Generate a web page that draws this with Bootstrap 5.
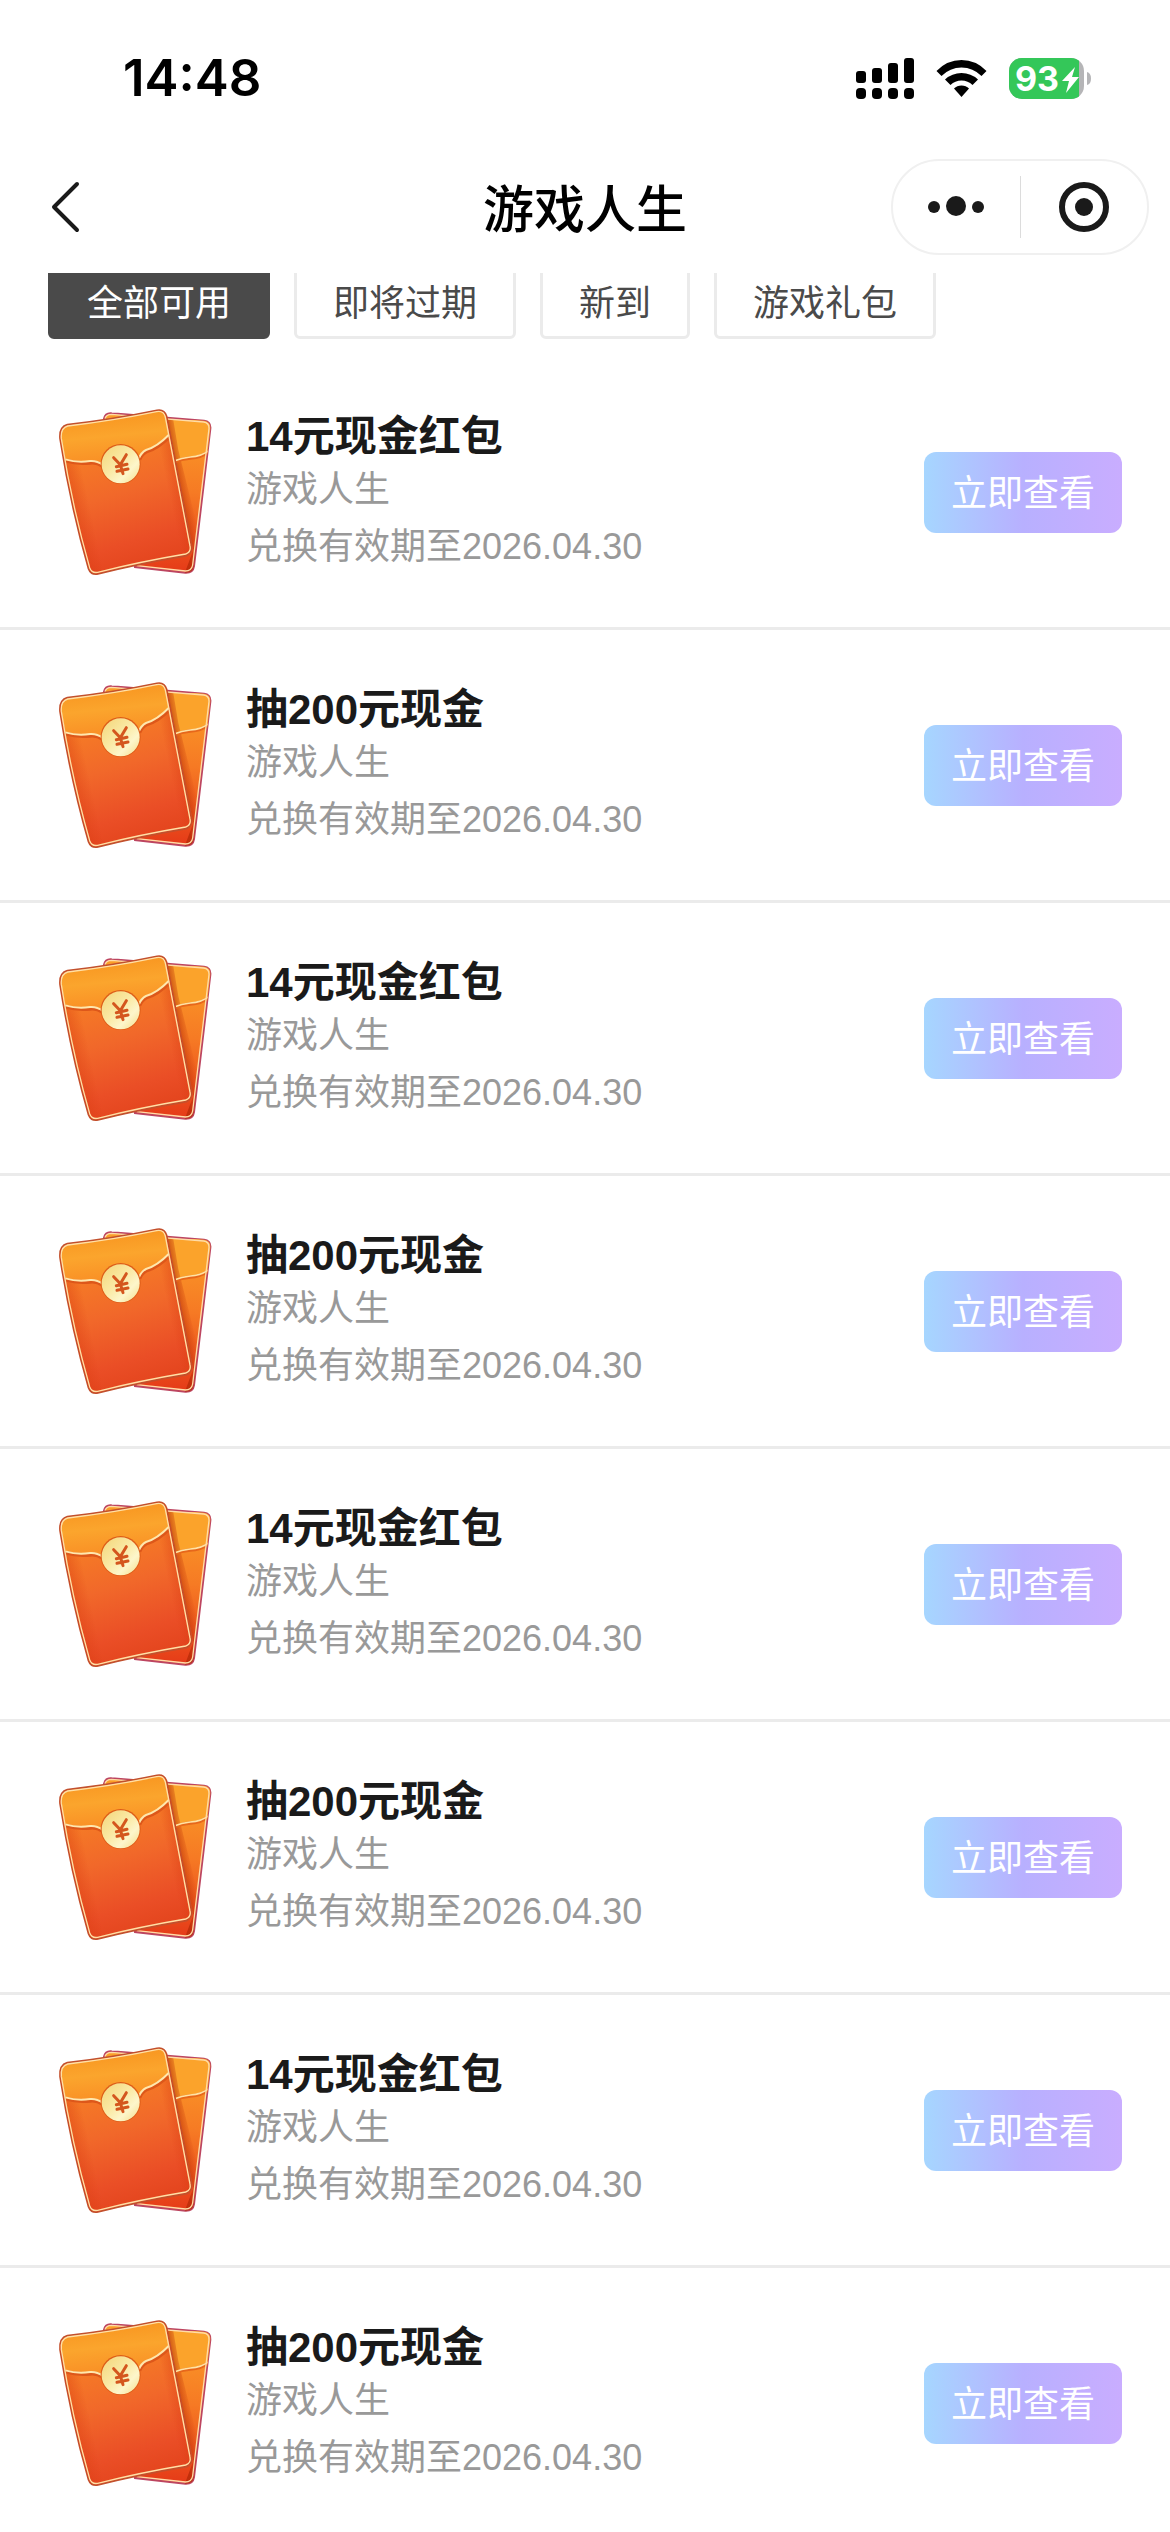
<!DOCTYPE html>
<html lang="zh-CN">
<head>
<meta charset="utf-8">
<meta name="viewport" content="width=device-width, initial-scale=1">
<title>游戏人生</title>
<link href="https://cdn.jsdelivr.net/npm/bootstrap@5.3.0/dist/css/bootstrap.min.css" rel="stylesheet">
<style>
  body { font-family: "Liberation Sans", "Noto Sans CJK SC", sans-serif; font-size: 36px; color: #1a1a1a; }
  .status-bar { height: 156px; padding: 0 78px 0 123px; }
  .clock { font-family: Inter, sans-serif; font-weight: 600; font-size: 51px; line-height: 60px; }
  .status-icons { gap: 22px; }
  .battery-text { font-family: Inter, sans-serif; font-weight: 700; font-size: 34px; }
  .title-bar { height: 117px; padding: 3px 21px 18px; }
  .title-side { flex: 1 1 0; }
  .back-link { margin-left: 27px; }
  .page-title { font-family: "Noto Sans CJK SC", sans-serif; font-size: 51px; font-weight: 500; line-height: 60px; padding-bottom: 2px; color: #000; }
  .capsule { width: 258px; height: 96px; border: 2px solid #f0f0f0; }
  .capsule .divider { width: 1px; height: 62px; background: #dcdcdc; }
  .tab-strip { gap: 24px; padding: 0 48px 18px; margin-top: -9px; }
  .tab-strip .btn { font-size: 36px; line-height: 52px; padding: 11px 36px 6px; border: 3px solid #ebebeb; border-radius: 6px; color: #4a4a4a; background: #fff; }
  .tab-strip .btn.active { background: #4a4a4a; border-color: #4a4a4a; color: #fff; }
  .coupon { height: 273px; padding: 0 48px; gap: 18px; border-bottom: 3px solid #ebebeb; }
  .coupon-text { padding-top: 3px; }
  .coupon-name { font-size: 42px; font-weight: 700; line-height: 54px; }
  .coupon-from { line-height: 52px; color: #999; }
  .coupon-date { line-height: 62px; color: #999; }
  .btn-look { font-size: 36px; line-height: 54px; padding: 14px 26px 11px; border-radius: 12px; color: #fff; border: 1px solid transparent; background: linear-gradient(90deg, #a6d6ff, #b8b0ff 50%, #c9adff) border-box; }
</style>
</head>
<body class="bg-white">
<svg class="position-absolute" width="0" height="0" aria-hidden="true">
  <defs>
    <linearGradient id="front" x1="0.35" y1="0" x2="0.6" y2="1"><stop offset="0" stop-color="#f98a22"/><stop offset=".5" stop-color="#f1682a"/><stop offset=".8" stop-color="#ea4e26"/><stop offset="1" stop-color="#e2431c"/></linearGradient>
    <linearGradient id="flap" x1="0.4" y1="0" x2="0.6" y2="1"><stop offset="0" stop-color="#f8941f"/><stop offset=".45" stop-color="#fba52d"/><stop offset="1" stop-color="#f98b24"/></linearGradient>
    <linearGradient id="back" x1="0" y1="0" x2="0" y2="1"><stop offset="0" stop-color="#fba028"/><stop offset=".5" stop-color="#f67a24"/><stop offset="1" stop-color="#e53a18"/></linearGradient>
    <linearGradient id="side" gradientUnits="userSpaceOnUse" x1="102" y1="346" x2="420" y2="278"><stop offset="0" stop-color="#d93a10" stop-opacity=".4"/><stop offset=".14" stop-color="#d93a10" stop-opacity="0"/><stop offset=".88" stop-color="#d93a10" stop-opacity="0"/><stop offset="1" stop-color="#d93a10" stop-opacity=".4"/></linearGradient>
    <linearGradient id="shade" gradientUnits="userSpaceOnUse" x1="412" y1="300" x2="452" y2="293"><stop offset="0" stop-color="#b52a06" stop-opacity=".75"/><stop offset="1" stop-color="#c93a0a" stop-opacity="0"/></linearGradient>
    <linearGradient id="coin" x1="0" y1="0" x2="1" y2="1"><stop offset="0" stop-color="#f3d67a"/><stop offset=".45" stop-color="#fae9a4"/><stop offset=".7" stop-color="#fdf6cb"/><stop offset="1" stop-color="#f4dc88"/></linearGradient>
    <clipPath id="backClip"><path d="M192 86Q196 68 215 70L492 92Q513 95 511 116L462 528Q459 549 436 548L285 531Z"/></clipPath>
  </defs>
  <symbol id="packet" viewBox="24 36 540 540">
    <path d="M192 86Q196 68 215 70L492 92Q513 95 511 116L462 528Q459 549 436 548L285 531Z" fill="url(#back)" stroke="#bd4560" stroke-width="6"/>
    <g clip-path="url(#backClip)">
      <path d="M380 90H520V184Q480 202 450 205Q425 207 400 217Z" fill="#fba32b"/>
      <path d="M372 60L460 480L430 560H500L470 400L415 180L400 90Z" fill="url(#shade)"/>
      <path d="M511 182Q484 203 451 204Q425 206 400 217" fill="none" stroke="#e7671b" stroke-width="10"/>
      <path d="M511 179Q484 200 451 201Q425 203 400 214" fill="none" stroke="#ffe3a4" stroke-width="5"/>
    </g>
    <path d="M195 86Q198 73 215 73L491 96Q508 98 507 116L458 525Q455 543 436 543L290 527" fill="none" stroke="#ffdca8" stroke-width="4"/>
    <path d="M82 104Q220 88 351 61Q373 57 380 79L455 468Q458 488 439 497Q300 520 174 552Q153 556 145 535Q92 350 60 146Q57 111 82 104Z" fill="url(#front)" stroke="#c2502d" stroke-width="5"/>
    <path d="M82 104Q220 88 351 61Q373 57 380 79L455 468Q458 488 439 497Q300 520 174 552Q153 556 145 535Q92 350 60 146Q57 111 82 104Z" fill="url(#side)"/>
    <path d="M82 108Q220 92 351 65Q371 61 376 80L388 137Q352 171 318 181Q303 197 296 211L188 225Q172 213 150 216Q112 221 76 208L64 146Q61 115 82 108Z" fill="url(#flap)"/>
    <path d="M76 212Q112 222 150 218Q170 215 188 228M298 208Q306 191 320 184Q354 174 388 139" fill="none" stroke="#dd571a" stroke-width="12"/>
    <path d="M76 208Q112 219 150 213Q170 211 188 224M296 206Q304 187 318 180Q352 170 386 135" fill="none" stroke="#ffe7ad" stroke-width="6"/>
    <path d="M83 108Q220 92 350 65Q371 61 376 81L450 468Q454 486 437 492Q300 515 173 547Q155 550 149 533Q96 348 64 146Q61 114 83 108Z" fill="none" stroke="#ffe0a6" stroke-width="4"/>
    <circle cx="242" cy="222" r="60" fill="#dd5c18"/>
    <circle cx="242" cy="223" r="57" fill="url(#coin)"/>
    <path d="M221 203L241 224M259 194L241 224L249 251M229 230L261 223M231 244L264 237" fill="none" stroke="#d4561e" stroke-width="9" stroke-linecap="round"/>
  </symbol>
</svg>

<div class="d-flex flex-column vh-100 overflow-hidden">
  <div class="status-bar d-flex align-items-center justify-content-between flex-shrink-0">
    <span class="clock text-black">14:48</span>
    <div class="status-icons d-flex align-items-center">
      <svg width="58" height="41" viewBox="0 0 58 41" aria-label="信号"><rect y="13" width="10" height="12" rx="3"/><rect x="16" y="10" width="10" height="15" rx="3"/><rect x="32" y="5" width="10" height="20" rx="3"/><rect x="48" width="10" height="25" rx="3"/><rect y="30" width="10" height="11" rx="4"/><rect x="16" y="30" width="10" height="11" rx="4"/><rect x="32" y="30" width="10" height="11" rx="4"/><rect x="48" y="30" width="10" height="11" rx="4"/></svg>
      <svg width="51" height="41" viewBox="0 0 51 41" aria-label="无线网络"><path d="M0.500 13Q11 2 25.500 2T50.500 13L45.500 18Q37 9.500 25.500 9.500T5.500 18Z"/><path d="M9 21.500Q16 15 25.500 15T42 21.500L36.500 27Q32 22.500 25.500 22.500T14.500 27Z"/><path d="M18 30.500Q21 27.500 25.500 27.500T33 30.500L25.500 39Z"/></svg>
      <svg width="83" height="41" viewBox="0 0 83 41" aria-label="电量 93%"><defs><clipPath id="cell"><rect width="75" height="41" rx="13"/></clipPath></defs><g clip-path="url(#cell)"><rect width="75" height="41" fill="#b5b5b7"/><rect width="70" height="41" fill="#34c759"/></g><path d="M78 14Q82 15 82 20.500T78 27Z" fill="#b5b5b7"/><text class="battery-text" x="6" y="33" fill="#fff">93</text><path d="M66 9L53 23H60L57 35L70 19H63Z" fill="#fff"/></svg>
    </div>
  </div>

  <header class="title-bar d-flex align-items-center flex-shrink-0">
    <div class="title-side d-flex">
      <a href="#" aria-label="返回" class="back-link d-flex"><svg width="36" height="54" viewBox="0 0 36 54"><path d="M29 4L6 27L29 50" fill="none" stroke="#1a1a1a" stroke-width="4" stroke-linecap="round" stroke-linejoin="round"/></svg></a>
    </div>
    <h1 class="page-title m-0">游戏人生</h1>
    <div class="title-side d-flex justify-content-end">
      <div class="capsule d-flex align-items-center rounded-pill">
        <button type="button" class="btn border-0 p-0 d-flex flex-fill justify-content-center" aria-label="更多"><svg width="56" height="56" viewBox="0 0 56 56" fill="#1a1a1a"><circle cx="6" cy="28" r="6"/><circle cx="28" cy="27" r="10"/><circle cx="50" cy="28" r="6"/></svg></button>
        <span class="divider"></span>
        <button type="button" class="btn border-0 p-0 d-flex flex-fill justify-content-center" aria-label="关闭"><svg width="56" height="56" viewBox="0 0 56 56"><circle cx="28" cy="28" r="22" fill="none" stroke="#1a1a1a" stroke-width="6"/><circle cx="28" cy="28" r="9" fill="#1a1a1a"/></svg></button>
      </div>
    </div>
  </header>

  <main class="flex-fill overflow-hidden">
    <nav class="tab-strip d-flex">
      <button type="button" class="btn active">全部可用</button>
      <button type="button" class="btn">即将过期</button>
      <button type="button" class="btn">新到</button>
      <button type="button" class="btn">游戏礼包</button>
    </nav>
    <ul class="list-unstyled m-0">
      <li class="coupon d-flex align-items-center">
        <svg class="flex-shrink-0" width="180" height="180"><use href="#packet"/></svg>
        <div class="coupon-text flex-fill"><div class="coupon-name">14元现金红包</div><div class="coupon-from">游戏人生</div><div class="coupon-date">兑换有效期至2026.04.30</div></div>
        <button type="button" class="btn btn-look flex-shrink-0">立即查看</button>
      </li>
      <li class="coupon d-flex align-items-center">
        <svg class="flex-shrink-0" width="180" height="180"><use href="#packet"/></svg>
        <div class="coupon-text flex-fill"><div class="coupon-name">抽200元现金</div><div class="coupon-from">游戏人生</div><div class="coupon-date">兑换有效期至2026.04.30</div></div>
        <button type="button" class="btn btn-look flex-shrink-0">立即查看</button>
      </li>
      <li class="coupon d-flex align-items-center">
        <svg class="flex-shrink-0" width="180" height="180"><use href="#packet"/></svg>
        <div class="coupon-text flex-fill"><div class="coupon-name">14元现金红包</div><div class="coupon-from">游戏人生</div><div class="coupon-date">兑换有效期至2026.04.30</div></div>
        <button type="button" class="btn btn-look flex-shrink-0">立即查看</button>
      </li>
      <li class="coupon d-flex align-items-center">
        <svg class="flex-shrink-0" width="180" height="180"><use href="#packet"/></svg>
        <div class="coupon-text flex-fill"><div class="coupon-name">抽200元现金</div><div class="coupon-from">游戏人生</div><div class="coupon-date">兑换有效期至2026.04.30</div></div>
        <button type="button" class="btn btn-look flex-shrink-0">立即查看</button>
      </li>
      <li class="coupon d-flex align-items-center">
        <svg class="flex-shrink-0" width="180" height="180"><use href="#packet"/></svg>
        <div class="coupon-text flex-fill"><div class="coupon-name">14元现金红包</div><div class="coupon-from">游戏人生</div><div class="coupon-date">兑换有效期至2026.04.30</div></div>
        <button type="button" class="btn btn-look flex-shrink-0">立即查看</button>
      </li>
      <li class="coupon d-flex align-items-center">
        <svg class="flex-shrink-0" width="180" height="180"><use href="#packet"/></svg>
        <div class="coupon-text flex-fill"><div class="coupon-name">抽200元现金</div><div class="coupon-from">游戏人生</div><div class="coupon-date">兑换有效期至2026.04.30</div></div>
        <button type="button" class="btn btn-look flex-shrink-0">立即查看</button>
      </li>
      <li class="coupon d-flex align-items-center">
        <svg class="flex-shrink-0" width="180" height="180"><use href="#packet"/></svg>
        <div class="coupon-text flex-fill"><div class="coupon-name">14元现金红包</div><div class="coupon-from">游戏人生</div><div class="coupon-date">兑换有效期至2026.04.30</div></div>
        <button type="button" class="btn btn-look flex-shrink-0">立即查看</button>
      </li>
      <li class="coupon d-flex align-items-center">
        <svg class="flex-shrink-0" width="180" height="180"><use href="#packet"/></svg>
        <div class="coupon-text flex-fill"><div class="coupon-name">抽200元现金</div><div class="coupon-from">游戏人生</div><div class="coupon-date">兑换有效期至2026.04.30</div></div>
        <button type="button" class="btn btn-look flex-shrink-0">立即查看</button>
      </li>
    </ul>
  </main>
</div>
<script src="https://cdn.jsdelivr.net/npm/bootstrap@5.3.0/dist/js/bootstrap.bundle.min.js"></script>
</body>
</html>
